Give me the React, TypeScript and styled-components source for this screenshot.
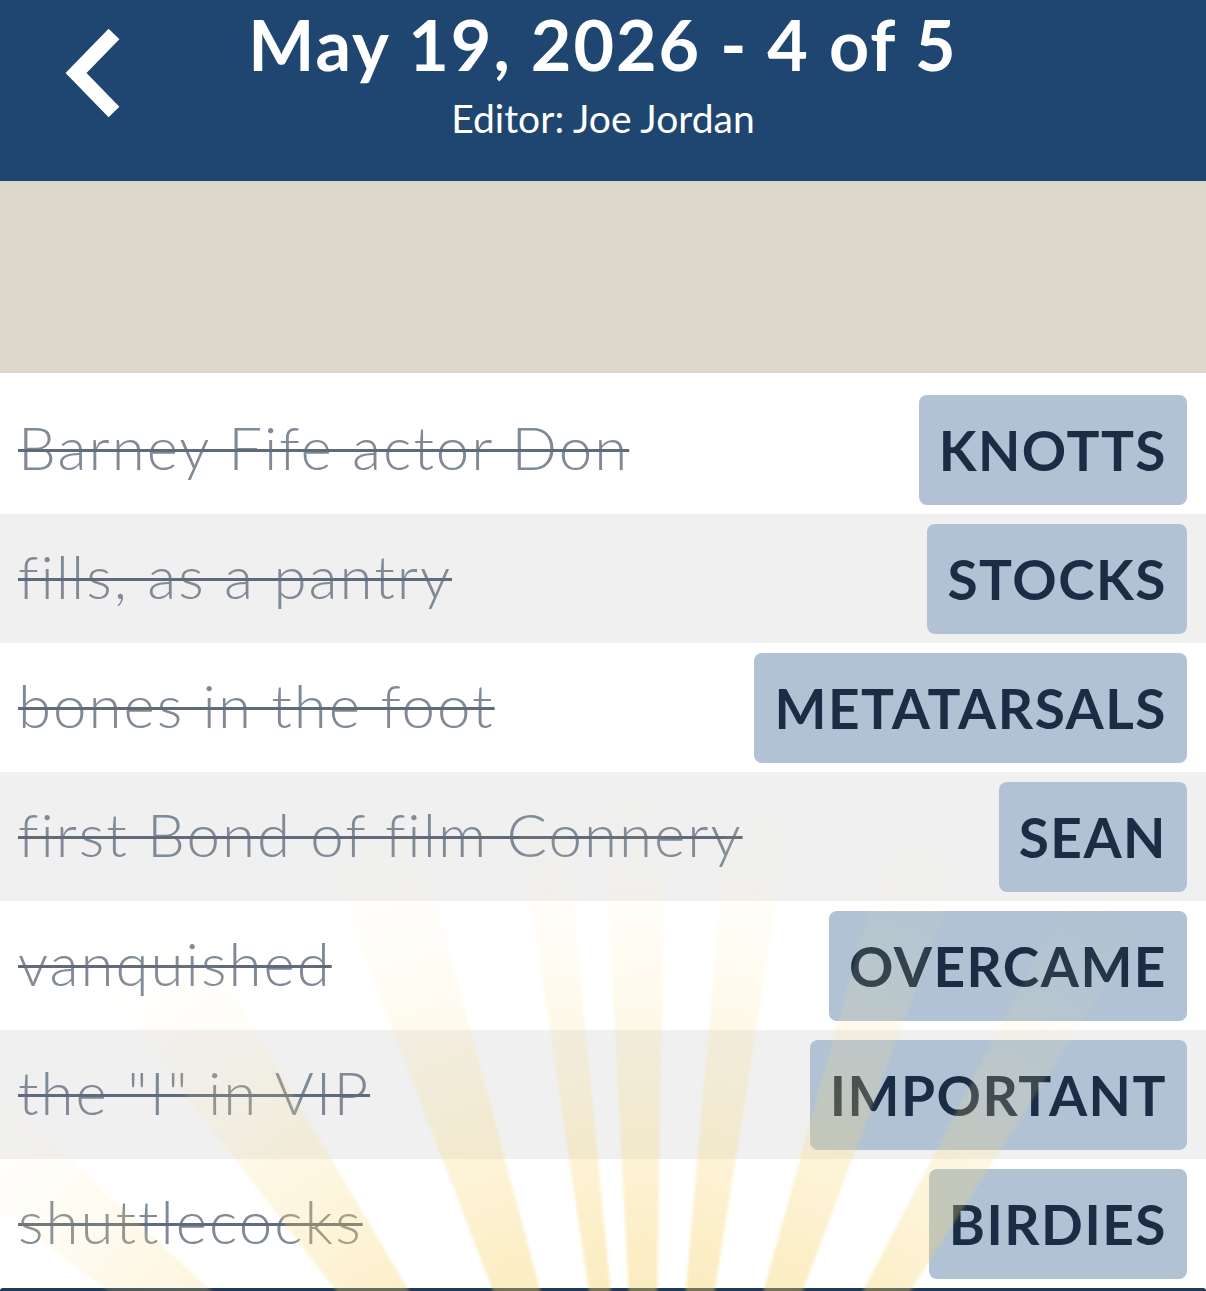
import React from 'react'
import styled, { createGlobalStyle } from 'styled-components'

const GlobalStyle = createGlobalStyle`
  html, body {
    margin: 0;
    padding: 0;
    background: #ffffff;
  }
  body {
    font-family: 'Lato', 'Open Sans', sans-serif;
  }
`

const Screen = styled.div`
  position: relative;
  width: 1206px;
  height: 1291px;
  overflow: hidden;
  display: flex;
  flex-direction: column;
  background: #ffffff;
`

const Header = styled.header`
  height: 181px;
  flex: none;
  background: #1f4670;
  display: grid;
  grid-template-columns: 200px 1fr 200px;
  align-items: start;
`

const BackButton = styled.button`
  border: 0;
  background: none;
  padding: 0;
  margin: 26px 0 0 58px;
  width: 68px;
  height: 94px;
  cursor: pointer;
  display: flex;
`

const TitleBlock = styled.div`
  display: flex;
  flex-direction: column;
  align-items: center;
  color: #ffffff;
  padding-top: 2px;
`

const Title = styled.h1`
  margin: 0;
  font-size: 70px;
  line-height: 84px;
  font-weight: 700;
  letter-spacing: 2px;
  white-space: nowrap;
`

const Editor = styled.div`
  margin-top: 7px;
  font-size: 39px;
  line-height: 50px;
  font-weight: 400;
`

const Banner = styled.div`
  height: 192px;
  flex: none;
  background: #ded8cc;
`

const List = styled.ul`
  list-style: none;
  margin: 0;
  padding: 12px 0 0;
  flex: 1;
  display: flex;
  flex-direction: column;
`

const Row = styled.li<{ $shaded: boolean }>`
  height: 129px;
  flex: none;
  display: flex;
  align-items: center;
  justify-content: space-between;
  padding: 0 19px 0 18px;
  background: ${({ $shaded }) => ($shaded ? '#f0f0f0' : '#ffffff')};
`

const Clue = styled.span`
  font-size: 60px;
  font-weight: 300;
  letter-spacing: 2px;
  font-variant-ligatures: none;
  color: #7f8a96;
  text-decoration: line-through;
  text-decoration-color: #5f6b78;
  text-decoration-thickness: 3px;
  white-space: nowrap;
  margin-top: -6px;
`

const Answer = styled.span`
  height: 110px;
  display: flex;
  align-items: center;
  padding: 0 20px;
  border-radius: 8px;
  background: #b0c2d3;
  color: #1b2d44;
  font-size: 55px;
  font-weight: 700;
  letter-spacing: 1.5px;
  white-space: nowrap;
`

const BottomBar = styled.div`
  height: 3px;
  flex: none;
  background: #1e3a56;
  border-radius: 3px 3px 0 0;
`

const RayLayer = styled.svg`
  position: absolute;
  left: 0;
  top: 373px;
  width: 1206px;
  height: 918px;
  pointer-events: none;
`

const entries = [
  { clue: 'Barney Fife actor Don', answer: 'KNOTTS' },
  { clue: 'fills, as a pantry', answer: 'STOCKS' },
  { clue: 'bones in the foot', answer: 'METATARSALS' },
  { clue: 'first Bond of film Connery', answer: 'SEAN' },
  { clue: 'vanquished', answer: 'OVERCAME' },
  { clue: 'the "I" in VIP', answer: 'IMPORTANT' },
  { clue: 'shuttlecocks', answer: 'BIRDIES' },
]

// sunburst over the bottom of the list: angle from vertical and spread, in degrees
const rays = [
  { a: -50, w: 6 },
  { a: -34, w: 7 },
  { a: -18, w: 6 },
  { a: -7, w: 3 },
  { a: -1, w: 4 },
  { a: 7, w: 4 },
  { a: 18, w: 5 },
  { a: 30, w: 5 },
]

function Sunburst() {
  const cx = 650
  const cy = 1327
  const len = 920
  const toRad = (d: number) => (d * Math.PI) / 180
  return (
    <RayLayer viewBox="0 0 1206 918">
      <defs>
        <radialGradient id="rayFade" cx={cx} cy={cy} r={len} gradientUnits="userSpaceOnUse">
          <stop offset="0.3" stopColor="#f5cd55" stopOpacity="0.5" />
          <stop offset="0.5" stopColor="#f6d062" stopOpacity="0.36" />
          <stop offset="0.7" stopColor="#f8d97e" stopOpacity="0.22" />
          <stop offset="0.88" stopColor="#fbe6ad" stopOpacity="0.08" />
          <stop offset="1" stopColor="#fdf0c8" stopOpacity="0" />
        </radialGradient>
        <filter id="raySoft" x="-10%" y="-10%" width="120%" height="120%">
          <feGaussianBlur stdDeviation="1.5" />
        </filter>
      </defs>
      <g filter="url(#raySoft)">
        {rays.map((r, i) => {
          const a1 = toRad(r.a - r.w / 2)
          const a2 = toRad(r.a + r.w / 2)
          const p1 = `${cx + Math.sin(a1) * len},${cy - Math.cos(a1) * len}`
          const p2 = `${cx + Math.sin(a2) * len},${cy - Math.cos(a2) * len}`
          return <polygon key={i} points={`${cx},${cy} ${p1} ${p2}`} fill="url(#rayFade)" />
        })}
      </g>
    </RayLayer>
  )
}

export default function App() {
  return (
    <>
      <GlobalStyle />
      <Screen>
        <Header>
          <BackButton aria-label="Back">
            <svg width="68" height="94" viewBox="0 0 68 94">
              <path d="M56 8 L18 47 L56 86" fill="none" stroke="#ffffff" strokeWidth="15" strokeLinejoin="miter" />
            </svg>
          </BackButton>
          <TitleBlock>
            <Title>May 19, 2026 - 4 of 5</Title>
            <Editor>Editor: Joe Jordan</Editor>
          </TitleBlock>
          <div />
        </Header>
        <Banner />
        <List>
          {entries.map((e, i) => (
            <Row key={e.answer} $shaded={i % 2 === 1}>
              <Clue>{e.clue}</Clue>
              <Answer>{e.answer}</Answer>
            </Row>
          ))}
        </List>
        <BottomBar />
        <Sunburst />
      </Screen>
    </>
  )
}
